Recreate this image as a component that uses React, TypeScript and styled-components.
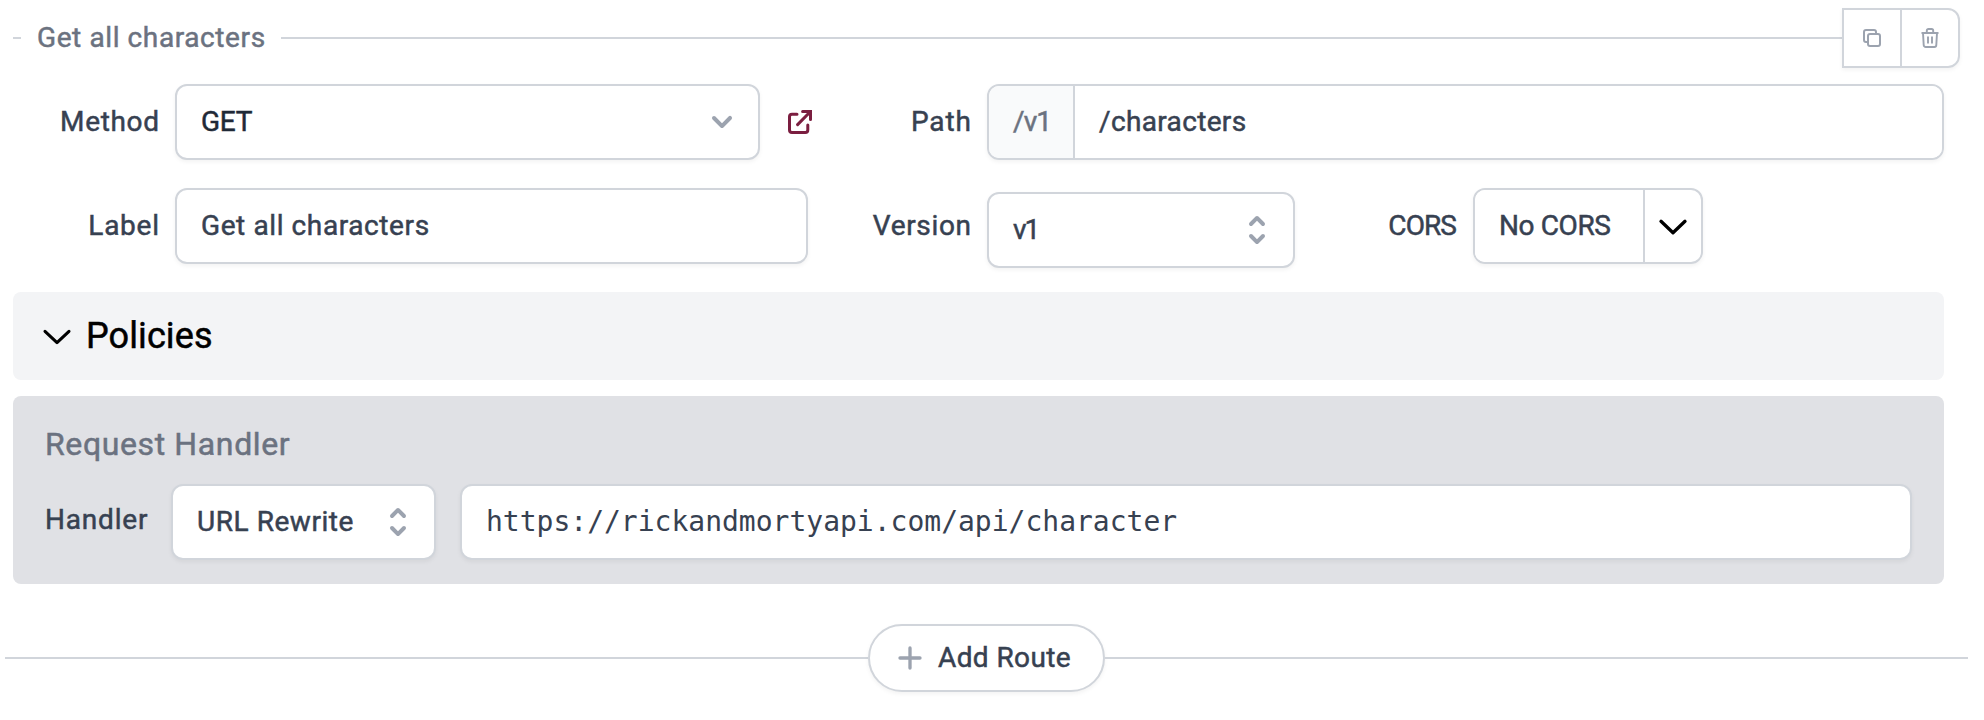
import React from 'react';
import styled, { createGlobalStyle } from 'styled-components';

const Global = createGlobalStyle`
  *, *::before, *::after { box-sizing: border-box; }
  body { margin: 0; background: #fff; font-family: Roboto, "Liberation Sans", sans-serif; color: #374151; }
  button { font: inherit; color: inherit; background: none; border: 0; padding: 0; margin: 0; }
`;

const border = '#d1d5db';
const shadow = '0 2px 4px rgba(0, 0, 0, 0.05)';

const Page = styled.main`
  width: 1984px;
  height: 720px;
  padding: 8px 16px 0 5px;
  overflow: hidden;
`;
const Route = styled.section`
  margin-left: 8px;
  width: 1931px;
`;
const Header = styled.header`
  display: flex;
  align-items: center;
  width: 1947px;
  height: 60px;
  margin-bottom: 16px;
`;
const Rule = styled.span<{ $w?: number }>`
  height: 2px;
  background: ${border};
  ${p => (p.$w ? `flex: 0 0 ${p.$w}px;` : 'flex: 1;')}
`;
const Text = styled.span<{ $ls?: number; $size?: number; $color?: string }>`
  font-size: ${p => p.$size ?? 28}px;
  font-weight: 400;
  -webkit-text-stroke: 0.5px currentColor;
  line-height: 40px;
  letter-spacing: ${p => p.$ls ?? 0}px;
  margin-right: ${p => -(p.$ls ?? 0)}px;
  color: ${p => p.$color ?? '#374151'};
  white-space: nowrap;
`;
const Title = styled.h2`
  display: flex;
  margin: 0;
  width: 260px;
  padding: 0 0 0 16px;
`;
const Actions = styled.div`
  display: flex;
  height: 60px;
  border: 2px solid ${border};
  border-radius: 0 12px 12px 0;
  box-shadow: ${shadow};
`;
const IconButton = styled.button`
  display: flex;
  align-items: center;
  justify-content: center;
  width: 56px;
  color: #9ca3af;
  & + & { width: 58px; border-left: 2px solid ${border}; }
`;
const Row = styled.div`
  display: flex;
  height: 76px;
  margin-bottom: 28px;
`;
const Label = styled.label<{ $w: number }>`
  display: flex;
  justify-content: flex-end;
  align-items: center;
  flex: 0 0 ${p => p.$w}px;
  height: 76px;
  padding: 0 16px 0 0;
`;
const Field = styled.div<{ $w?: number; $drop?: number }>`
  display: flex;
  align-items: center;
  justify-content: space-between;
  ${p => (p.$w ? `flex: 0 0 ${p.$w}px;` : 'flex: 1;')}
  height: 76px;
  margin-top: ${p => p.$drop ?? 0}px;
  padding: 0 16px 0 24px;
  border: 2px solid ${border};
  border-radius: 12px;
  background: #fff;
  box-shadow: ${shadow};
`;
const Group = styled.div<{ $w: number }>`
  display: flex;
  flex: 0 0 ${p => p.$w}px;
  height: 76px;
  border: 2px solid ${border};
  border-radius: 12px;
  overflow: hidden;
  box-shadow: ${shadow};
`;
const Cell = styled.div<{ $w?: number; $fill?: boolean; $split?: boolean }>`
  display: flex;
  align-items: center;
  ${p => (p.$w ? `flex: 0 0 ${p.$w}px;` : 'flex: 1;')}
  padding: 0 0 0 24px;
  background: ${p => (p.$fill ? '#f9fafb' : '#fff')};
  border-right: ${p => (p.$split ? `2px solid ${border}` : '0')};
`;
const Toggle = styled.button`
  display: flex;
  flex: 1;
  align-items: center;
  justify-content: center;
  color: #000;
`;
const OpenLink = styled.span`
  display: flex;
  align-items: center;
  justify-content: center;
  width: 80px;
  color: #7b1e40;
`;
const Policies = styled.div`
  display: flex;
  align-items: center;
  gap: 13px;
  height: 88px;
  margin-bottom: 16px;
  padding: 0 0 0 28px;
  border-radius: 8px;
  background: #f3f4f6;
  color: #000;
`;
const Handler = styled.div`
  height: 188px;
  padding: 28px 32px 24px;
  border-radius: 8px;
  background: #e0e1e5;
`;
const HandlerTitle = styled.h3`
  display: flex;
  margin: 0 0 20px;
`;
const HandlerRow = styled.div`
  display: flex;
  gap: 24px;
`;
const HandlerLabel = styled.label`
  display: flex;
  align-items: center;
  width: 102px;
  height: 76px;
  padding-bottom: 4px;
`;
const Mono = styled.span`
  font: 400 28px/40px "DejaVu Sans Mono", monospace;
  white-space: nowrap;
`;
const AddRow = styled.div`
  display: flex;
  align-items: center;
  margin-top: 40px;
`;
const AddButton = styled.button`
  display: flex;
  align-items: center;
  width: 237px;
  height: 68px;
  padding-left: 20px;
  gap: 8px;
  border: 2px solid ${border};
  border-radius: 34px;
  background: #fff;
  box-shadow: ${shadow};
`;

const Solid = ({ d }: { d: string }) => (
  <svg width="40" height="40" viewBox="0 0 20 20" fill="#9ca3af"><path fillRule="evenodd" clipRule="evenodd" d={d} /></svg>
);
const ChevronDown = () => (
  <Solid d="M5.293 7.293a1 1 0 011.414 0L10 10.586l3.293-3.293a1 1 0 111.414 1.414l-4 4a1 1 0 01-1.414 0l-4-4a1 1 0 010-1.414z" />
);
const Selector = () => (
  <Solid d="M10 3a1 1 0 01.707.293l3 3a1 1 0 01-1.414 1.414L10 5.414 7.707 7.707a1 1 0 01-1.414-1.414l3-3A1 1 0 0110 3zm-3.707 9.293a1 1 0 011.414 0L10 14.586l2.293-2.293a1 1 0 011.414 1.414l-3 3a1 1 0 01-1.414 0l-3-3a1 1 0 010-1.414z" />
);
const Outline = ({ size, sw, d, color = 'currentColor' }: { size: number; sw: number; d: string; color?: string }) => (
  <svg width={size} height={size} viewBox="0 0 24 24" fill="none" stroke={color} strokeWidth={sw} strokeLinecap="round" strokeLinejoin="round"><path d={d} /></svg>
);

export default function App() {
  return (
    <>
      <Global />
      <Page>
        <Route>
          <Header>
            <Rule $w={8} />
            <Title><Text $ls={0.6} $color="#6b7280">Get all characters</Text></Title>
            <Rule />
            <Actions>
              <IconButton aria-label="Duplicate">
                <svg width="20" height="20" viewBox="0 0 20 20" fill="none" stroke="currentColor" strokeWidth="2">
                  <rect x="6" y="6" width="12" height="12" rx="2" />
                  <path d="M6 14H4a2 2 0 01-2-2V4a2 2 0 012-2h8a2 2 0 012 2v2" />
                </svg>
              </IconButton>
              <IconButton aria-label="Delete">
                <svg width="20" height="20" viewBox="0 0 20 20" fill="none" stroke="currentColor" strokeWidth="1.9">
                  <path d="M1.5 5h17M6.8 5V2.6a1.6 1.6 0 011.6-1.6h3.2a1.6 1.6 0 011.6 1.6V5M3 5l.7 12a2 2 0 002 2h8.6a2 2 0 002-2L17 5M8 8.5v7M12 8.5v7" />
                </svg>
              </IconButton>
            </Actions>
          </Header>

          <Row>
            <Label $w={162}><Text $ls={0.65}>Method</Text></Label>
            <Field $w={585}><Text $ls={-0.2} $color="#1f2937">GET</Text><ChevronDown /></Field>
            <OpenLink>
              <svg width="24" height="24" viewBox="0 0 24 24" fill="none" stroke="currentColor" strokeWidth="3" strokeLinecap="round">
                <path d="M9 4.2H4a2.5 2.5 0 00-2.5 2.5V20A2.5 2.5 0 004 22.5h13.3a2.5 2.5 0 002.5-2.5v-5M14.6 1.5h7.9v7.9M22 2L9.6 14.6" />
              </svg>
            </OpenLink>
            <Label $w={147}><Text $ls={0.9}>Path</Text></Label>
            <Group $w={957}>
              <Cell $w={86} $fill $split><Text $ls={-0.9} $color="#6b7280">/v1</Text></Cell>
              <Cell><Text $ls={0.35}>/characters</Text></Cell>
            </Group>
          </Row>

          <Row>
            <Label $w={162}><Text $ls={0.75}>Label</Text></Label>
            <Field $w={633}><Text $ls={0.6}>Get all characters</Text></Field>
            <Label $w={179}><Text $ls={0.65}>Version</Text></Label>
            <Field $w={308} $drop={4}><Text $ls={-2}>v1</Text><Selector /></Field>
            <Label $w={178}><Text $ls={-0.9}>CORS</Text></Label>
            <Group $w={230}>
              <Cell $w={170} $split><Text $ls={-0.4}>No CORS</Text></Cell>
              <Toggle aria-label="CORS options"><Outline size={32} sw={2.5} d="M3 8.5l9 8.5 9-8.5" /></Toggle>
            </Group>
          </Row>

          <Policies>
            <Outline size={32} sw={2.3} d="M3 8.5l9 8.5 9-8.5" />
            <Text $size={36} $ls={0.1} $color="#000">Policies</Text>
          </Policies>

          <Handler>
            <HandlerTitle><Text $size={32} $ls={0.62} $color="#6b7280">Request Handler</Text></HandlerTitle>
            <HandlerRow>
              <HandlerLabel><Text $ls={0.8}>Handler</Text></HandlerLabel>
              <Field $w={265}><Text $ls={0.55}>URL Rewrite</Text><Selector /></Field>
              <Field><Mono>https://rickandmortyapi.com/api/character</Mono></Field>
            </HandlerRow>
          </Handler>
        </Route>

        <AddRow>
          <Rule $w={863} />
          <AddButton>
            <Outline size={40} sw={2} d="M12 6v12m6-6H6" color="#9ca3af" />
            <Text $ls={0.4}>Add Route</Text>
          </AddButton>
          <Rule />
        </AddRow>
      </Page>
    </>
  );
}
